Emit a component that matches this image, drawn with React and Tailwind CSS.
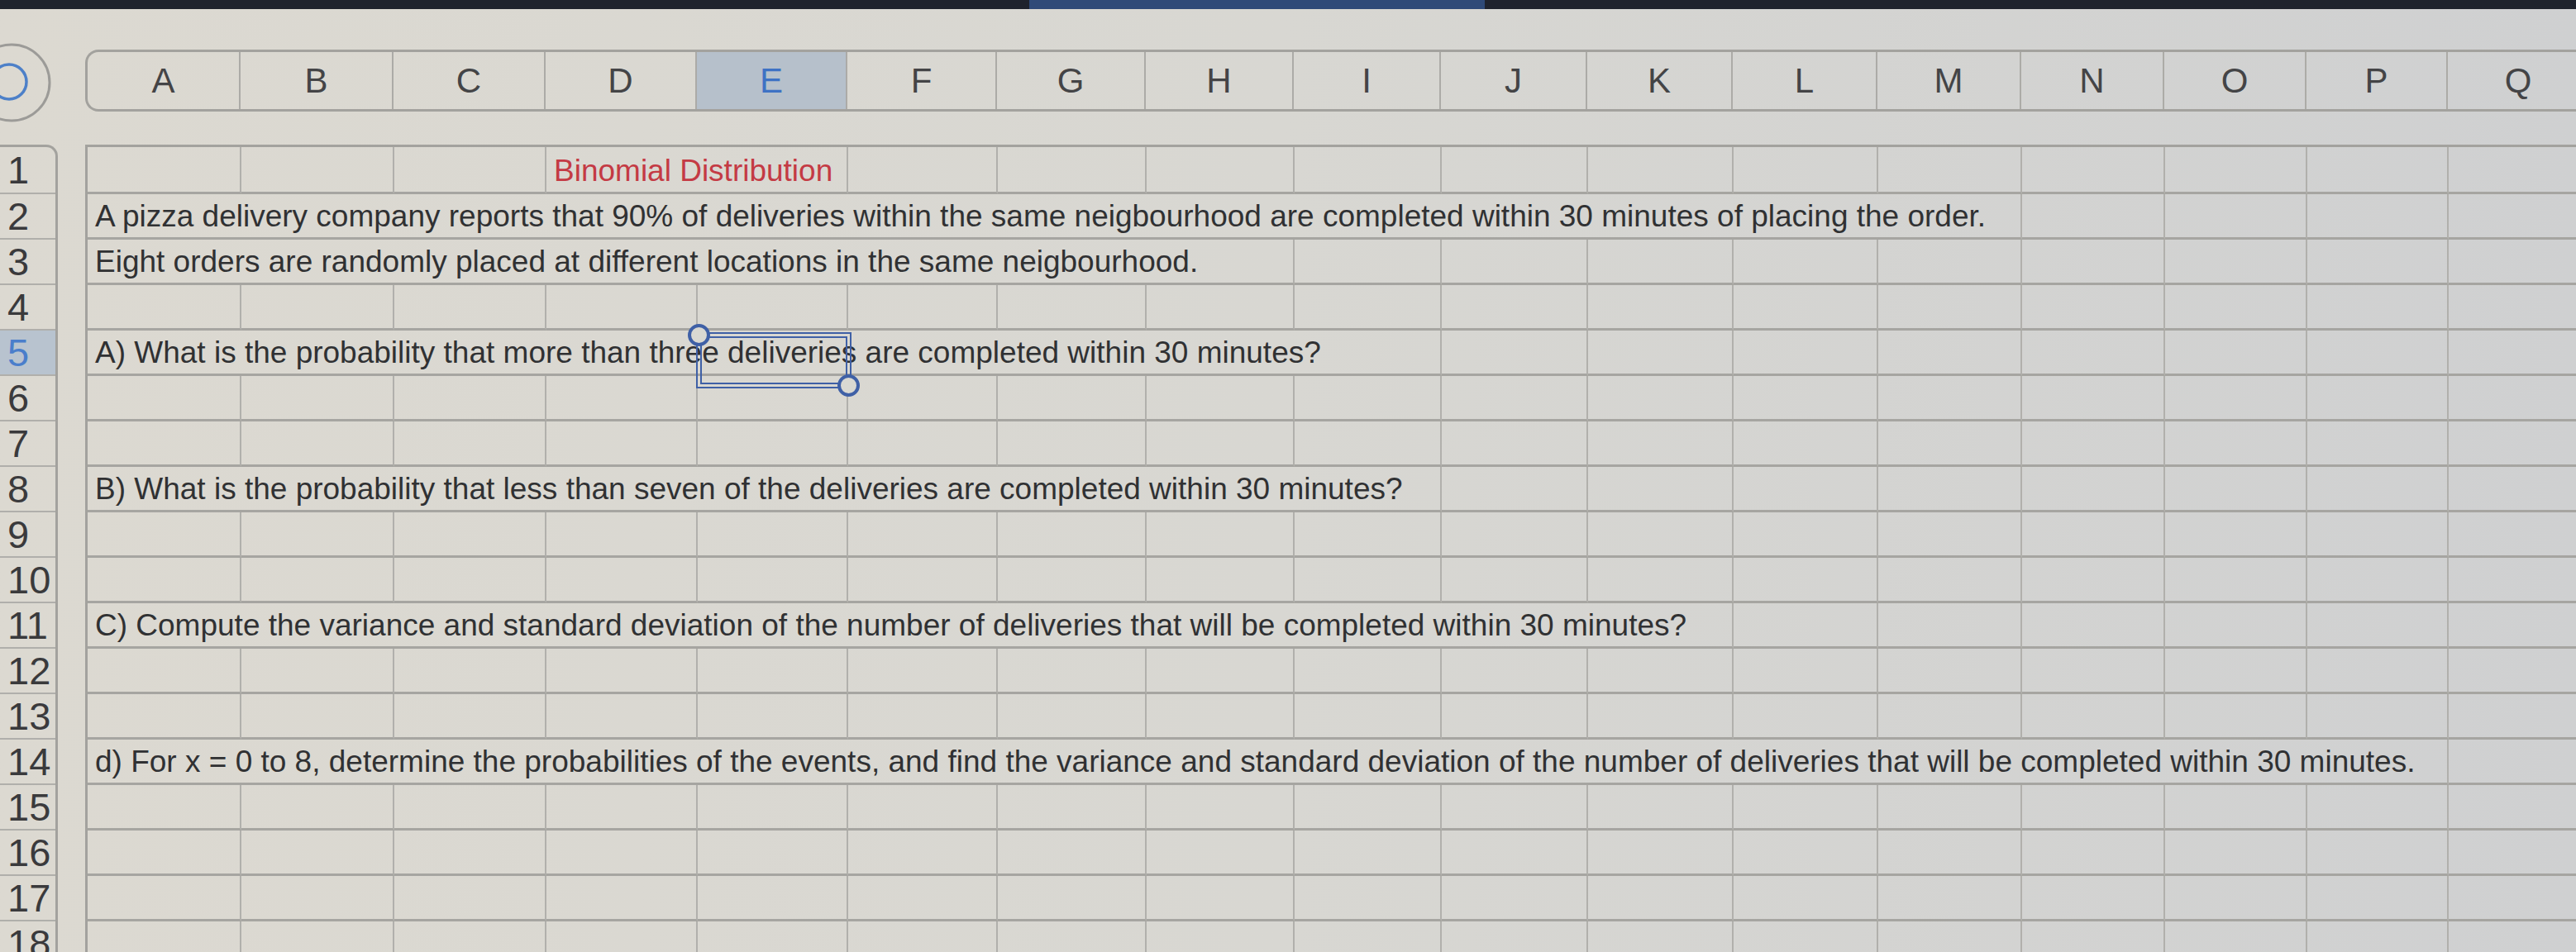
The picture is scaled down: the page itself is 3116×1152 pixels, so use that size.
const COLS = ['A', 'B', 'C', 'D', 'E', 'F', 'G', 'H', 'I', 'J', 'K', 'L', 'M', 'N', 'O', 'P', 'Q']
const WIDTHS = [186, 185, 184, 183, 182, 181, 180, 179, 178, 177, 176, 175, 174, 173, 172, 171, 172]

// merged cells per row: [firstCol, lastCol, text, red]
const MERGES = {
  1: [[3, 4, 'Binomial Distribution', true]],
  2: [[0, 12, 'A pizza delivery company reports that 90% of deliveries within the same neigbourhood are completed within 30 minutes of placing the order.']],
  3: [[0, 7, 'Eight orders are randomly placed at different locations in the same neigbourhood.']],
  5: [[0, 8, 'A) What is the probability that more than three deliveries are completed within 30 minutes?']],
  8: [[0, 8, 'B) What is the probability that less than seven of the deliveries are completed within 30 minutes?']],
  11: [[0, 10, 'C) Compute the variance and standard deviation of the number of deliveries that will be completed within 30 minutes?']],
  14: [[0, 15, 'd) For x = 0 to 8, determine the probabilities of the events, and find the variance and standard deviation of the number of deliveries that will be completed within 30 minutes.']],
}

const ROWS = Array.from({ length: 18 }, (_, i) => i + 1)

function rowCells(row) {
  const merges = MERGES[row] || []
  const cells = []
  let c = 0
  while (c < COLS.length) {
    const m = merges.find((x) => x[0] === c)
    if (m) {
      const w = WIDTHS.slice(m[0], m[1] + 1).reduce((a, b) => a + b, 0)
      cells.push({ key: c, width: w, text: m[2], red: m[3] })
      c = m[1] + 1
    } else {
      cells.push({ key: c, width: WIDTHS[c] })
      c++
    }
  }
  return cells
}

function SelectAll() {
  return (
    <svg width="103" height="110" viewBox="0 0 103 110" className="shrink-0">
      <circle cx="14" cy="62" r="46" fill="none" stroke="#9c9b98" strokeWidth="3" />
      <circle cx="11" cy="61" r="21" fill="none" stroke="#4d80c8" strokeWidth="3.5" />
    </svg>
  )
}

export default function App() {
  return (
    <div className="w-[3116px] h-[1152px] overflow-hidden relative bg-linear-to-r from-[#dcd9d1] via-[#d8d7d2] to-[#cfd0d1] font-['Liberation_Sans',Arial,sans-serif] text-[#303133]">
      {/* top edge of the monitor */}
      <div className="flex h-[11px]">
        <div className="w-[1245px] bg-[#1f232d]" />
        <div className="w-[551px] bg-[#2f4a78]" />
        <div className="flex-1 bg-[#1f232d]" />
      </div>

      {/* column headers */}
      <div className="flex h-[164px]">
        <div className="pt-[27px]">
          <SelectAll />
        </div>
        <div className="mt-[49px] h-[75px] flex border-[3px] border-r-0 border-[#a3a29e] rounded-l-[16px] overflow-hidden">
          {COLS.map((col, i) => (
            <div
              key={col}
              style={{ width: WIDTHS[i] - (i === 0 ? 3 : 0) }}
              className={`shrink-0 flex items-center justify-center text-[42px] leading-none ${i > 0 ? 'border-l-2 border-[#acaba7]' : ''} ${col === 'E' ? 'bg-[#b6c0cb] text-[#3e72c4]' : 'text-[#444446]'}`}
            >
              {col}
            </div>
          ))}
        </div>
      </div>

      {/* body */}
      <div className="flex">
        {/* row numbers */}
        <div className="w-[70px] shrink-0 border-t-[3px] border-r-[3px] border-[#a3a29e] rounded-tr-[14px]">
          {ROWS.map((r) => (
            <div
              key={r}
              className={`${r === 1 ? 'h-[57px]' : 'h-[55px]'} flex items-center pl-[9px] text-[47px] leading-none border-b-2 border-[#b0afab] ${r === 5 ? 'bg-[#b8c3cf] text-[#4a7ecb]' : 'text-[#3a3a3c]'}`}
            >
              {r}
            </div>
          ))}
        </div>

        <div className="w-[33px] shrink-0" />

        {/* grid */}
        <div className="relative border-t-[3px] border-l-[3px] border-[#a3a29e]">
          {ROWS.map((r) => (
            <div key={r} className={`flex ${r === 1 ? 'h-[57px]' : 'h-[55px]'}`}>
              {rowCells(r).map((cell) => (
                <div
                  key={cell.key}
                  style={{ width: cell.width }}
                  className="shrink-0 border-r-2 border-b-[3px] border-r-[#b1b0ac] border-b-[#a6a5a1] flex items-end pb-[7px] pl-[9px] whitespace-nowrap overflow-visible"
                >
                  {cell.text && (
                    <span className={`text-[37px] leading-none ${cell.red ? 'text-[#c43a44]' : ''}`}>{cell.text}</span>
                  )}
                </div>
              ))}
            </div>
          ))}

          {/* selection on E5 */}
          <div className="absolute left-[736px] top-[224px] w-[188px] h-[68px] border-[7px] border-double border-[#3f60a6]">
            <div className="absolute -left-[17px] -top-[17px] w-[27px] h-[27px] rounded-full border-[4px] border-[#3f60a6] bg-[#d9d8d2]" />
            <div className="absolute -right-[17px] -bottom-[17px] w-[27px] h-[27px] rounded-full border-[4px] border-[#3f60a6] bg-[#d9d8d2]" />
          </div>
        </div>
      </div>
    </div>
  )
}
